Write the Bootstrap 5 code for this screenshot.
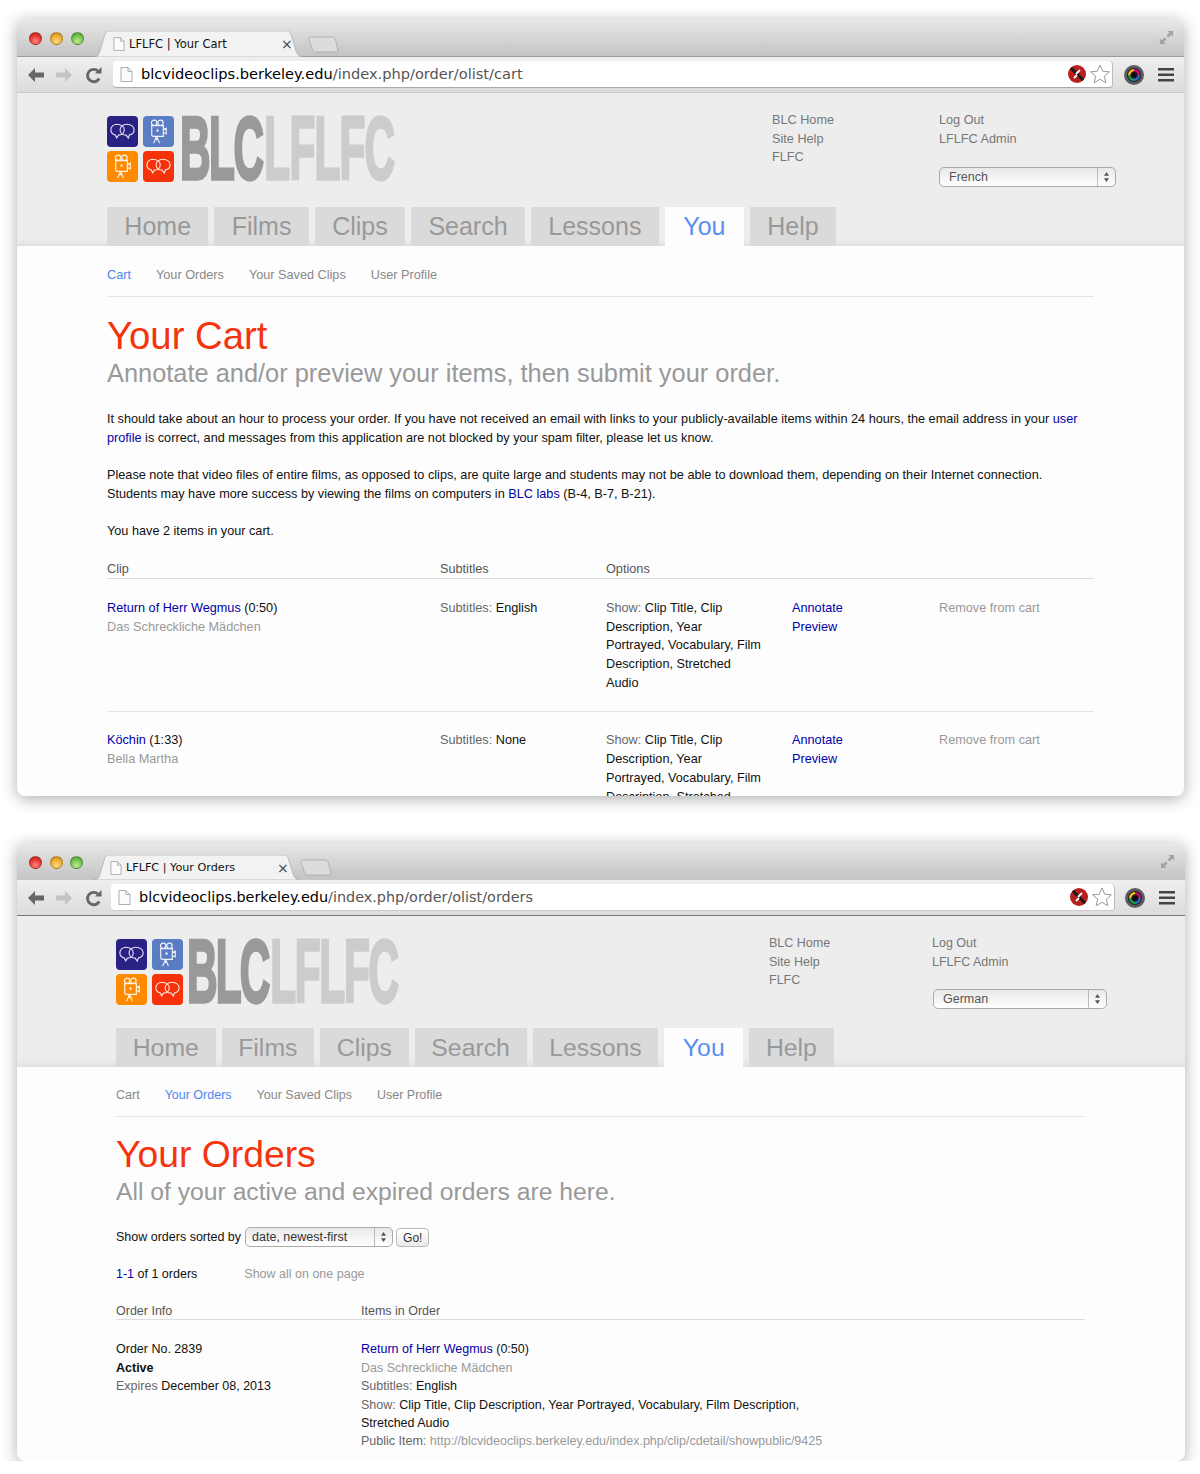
<!DOCTYPE html>
<html lang="en"><head><meta charset="utf-8"><title>LFLFC</title>
<link href="https://cdn.jsdelivr.net/npm/bootstrap@5.3.0/dist/css/bootstrap.min.css" rel="stylesheet">
<style>
html,body{background:#fff;margin:0;padding:0}
body{font-family:"Liberation Sans",Arial,sans-serif;color:#222;overflow-x:hidden}
.win{position:relative;background:#fdfdfd;border-radius:8px;overflow:hidden;box-shadow:0 3px 16px rgba(0,0,0,.32)}
.w1{margin:19px 16px 0 17px;height:777px;--lh:18.7px;--pad:90px;font-size:12.7px}
.w2{margin:47px 15px 0 17px;height:618px;--lh:18.4px;--pad:99px;font-size:12.5px}
.tabbar{height:38px;background:linear-gradient(#e8e8e8,#c4c4c4);border-bottom:1px solid #9c9c9c;padding-left:12px}
.w2 .tabbar{height:37px;border-bottom-color:#c6c6c6}
.lights{gap:8px;padding-top:13px;width:76px}
.w2 .lights{gap:7.5px}
.lamp{width:13px;height:13px;border-radius:50%;border:1px solid rgba(0,0,0,.25)}
.lamp-r{background:radial-gradient(circle at 50% 75%,#ff8a80,#e0352c 60%,#b5251f)}
.lamp-y{background:radial-gradient(circle at 50% 75%,#ffdb80,#eda92e 60%,#c0801a)}
.lamp-g{background:radial-gradient(circle at 50% 75%,#bdf08a,#6fbd4a 60%,#4b9430)}
.brtab{position:relative;width:212px;height:26px;margin-top:12px;margin-left:-11px;padding-left:19px;font:11.5px/27px "DejaVu Sans",sans-serif;color:#111;white-space:nowrap}
.w2 .brtab{margin-top:12px;height:25px;padding-left:16px;font-size:11.2px;line-height:26px}
.tabshape{position:absolute;left:0;top:0}
.tabtitle{position:relative;padding-left:16px;width:176px}
.tabdoc{position:absolute;left:0;top:6px}
.tabx{position:absolute;left:187px;top:0;font-size:14px;color:#444}
.w2 .tabx{left:183px}
.newtab{margin:17px 0 0 2px}
.w2 .newtab{margin:16px 0 0 -6px}
.fs{position:absolute;right:10px;top:11px}
.toolbar{height:36px;background:linear-gradient(#efefef,#dcdcdc);border-bottom:1px solid #c8c8c8;padding-left:10px}
.w2 .toolbar{border-bottom-color:#777}
.navic{width:18px;height:18px}
.nv2{margin-left:10px}
.nv3{margin-left:12px}
.omni{width:1000px;height:27px;margin-left:10px;background:#fff;border-radius:4px;border-bottom:1px solid #aaa;border-right:1px solid #bbb;padding:0 0 0 7px;position:relative}
.w2 .omni{width:1004px;margin-left:8px;border-bottom-color:#ccc}
.urltext{font:14.6px/28px "DejaVu Sans",sans-serif;color:#555;padding-left:8px;white-space:nowrap}
.w2 .urltext{font-size:14.4px}
.urltext b{font-weight:400;color:#000}
.omni-tail{position:absolute;right:2px;top:3px;gap:4px}
.lensic{margin-left:11px}
.w2 .lensic{margin-left:10px}
.burgic{margin-left:14px}
.hdr{background:#ededed;height:153px;padding-left:var(--pad);position:relative;box-shadow:inset 0 -8px 8px -8px rgba(0,0,0,.12)}
.w2 .hdr{height:151px}
.toprow{height:114px}
.w2 .toprow{height:112px}
.logo{margin-top:22px;width:289px}
.squares{display:grid;grid-template-columns:31px 31px;grid-template-rows:31px 31px;gap:4px 5px;margin-top:1px}
.sq{border-radius:4px;display:block}
.sq-navy{background:#2a2185}
.sq-blue{background:#5a7dc4}
.sq-orange{background:#ff8a00}
.sq-red{background:#f5320a}
.logotxt{display:flex;margin:2px 0 0 6px;width:216px;height:34px;transform:scale(.93,1.95);transform-origin:top left;font:700 45.5px/34px "Liberation Sans Narrow","Liberation Sans",sans-serif;-webkit-text-stroke:1.7px;color:#999;letter-spacing:-1.6px}
.w2 .logotxt{letter-spacing:-2px;margin-left:4px}
.logotxt span+span{color:#ccc;margin-left:2px;letter-spacing:-.9px}
.w2 .logotxt span+span{letter-spacing:-1.4px}
.toplinks{position:absolute;left:755px;top:18px;line-height:18.7px;color:#777}
.toplinks2{position:absolute;left:922px;top:18px;line-height:18.7px;color:#777}
.w2 .toplinks{left:752px}
.w2 .toplinks2{left:915px}
.fakesel{display:block;font:inherit;font-size:12.5px;line-height:18px;color:#555;border:1px solid #aaa;border-radius:5px;padding:0 0 0 9px;height:20px;
 background:linear-gradient(#bbb,#bbb) no-repeat calc(100% - 17px) 0/1px 100%,linear-gradient(#e8e8e8,#fff) no-repeat 0 0/100% 100%}
.selwrap{position:relative}
.selarrow{position:absolute;right:6px;top:5px;pointer-events:none}
.langsel{width:177px;margin-top:19px}
.w2 .langsel{width:174px;margin-top:18px;margin-left:1px}
.maintabs{gap:6px;height:39px;align-items:flex-end}
.mtab{display:block;height:39px;padding:0 17.35px;background:#dadada;color:#999;font-size:25px;line-height:39px;text-decoration:none}
.w2 .mtab{font-size:24.8px;padding:0 16.7px}
.mtab.on{background:#fdfdfd;color:#5b8ff0;padding:0 18.5px}
.w2 .mtab.on{padding:0 18.5px}
.body{padding:0 90px 0 var(--pad);line-height:var(--lh)}
.w2 .body{padding-right:100px}
.subnav{gap:25px;height:51px;padding-top:20px;border-bottom:1px solid #e4e4e4}
.w2 .subnav{height:50px;padding-top:19px}
.subnav a{color:#888;text-decoration:none}
.subnav a.on{color:#4d86f0}
.h-main{font-size:38.3px;line-height:44px;color:#f5330c;margin:17px 0 0;font-weight:400}
.w2 .h-main{font-size:37.3px;margin-top:15px}
.h-sub{font-size:25.4px;line-height:30px;color:#999;margin:0;font-weight:400}
.w2 .h-sub{font-size:24.7px;margin-top:1px}
.para{margin:0 0 18.7px;color:#111}
.para-first{margin-top:22px}
.para a,.lnk{color:#0000a8;text-decoration:none}
.grey{color:#999}
.lbl{color:#666}
.g1{display:grid;grid-template-columns:333px 166px 186px 147px 1fr}
.g1 .c3{padding-right:31px}
.thead1{color:#555;border-bottom:1px solid #ddd;margin:19px 0 1px;height:19px}
.trow1{padding:19px 0 19px;border-bottom:1px solid #e4e4e4;color:#111}
.g2{display:grid;grid-template-columns:245px 1fr}
.thead2{color:#555;border-bottom:1px solid #ddd;height:18px;margin-top:19px}
.sortrow{margin-top:20px;gap:4px;height:20px;line-height:20px;color:#111}
.sortsel{width:148px}
.sortsel .fakesel{color:#333;padding-left:6px}
.gobtn{font:12px/16px "Liberation Sans",sans-serif;height:19px;border:1px solid #bbb;border-radius:4px;background:linear-gradient(#fff,#eaeaea);color:#333;padding:1px 6px 0;margin-left:-1px}
.pager{margin-top:18px;gap:47px;color:#111}
.order{margin-top:20px;color:#111}
.showline{max-width:450px}
</style></head>
<body>
<svg width="0" height="0" class="d-block" aria-hidden="true"><defs>
<symbol id="chat" viewBox="0 0 32 32"><g fill="none" stroke="#fff" stroke-width="1.2" opacity=".85"><path d="M10.500 8.500c-4 0-6.500 2.600-6.500 5.700 0 2.600 1.800 4.700 4.500 5.300l1.500 3 1.800-2.800c3.800 0 6-2.500 6-5.500s-3-5.700-7.800-5.700z"/><path d="M20.500 8.500c-4 0-7 2.600-7 5.700s2.400 5.500 6.200 5.500l2.300 3 1.200-3.200c2.700-.6 4.800-2.700 4.800-5.300 0-3.100-3-5.700-7.500-5.700z"/></g></symbol>
<symbol id="cam" viewBox="0 0 32 32"><g fill="none" stroke="#fff" stroke-width="1.2" opacity=".9"><circle cx="11.500" cy="7" r="2.800"/><circle cx="18" cy="7" r="2.800"/><path d="M9 10h12v11H11c-1 0-2-1-2-2zM21 14l3-1.500v6L21 17"/><path d="M14 21l-3 7M14 21l3 7M14 21v4"/></g><path d="M15 13l1.500 3h-3z" fill="#fff"/></symbol>
<symbol id="arrows" viewBox="0 0 8 12"><path d="M4 0l3 4.500H1zM4 12L1 7.500h6z" fill="#555"/></symbol>
<symbol id="fsic" viewBox="0 0 16 16"><g fill="#a2a2a2"><path d="M9 1h6v6l-2-2-3 3-2-2 3-3zM1 15V9l2 2 3-3 2 2-3 3 2 2z"/></g></symbol>
<symbol id="doc" viewBox="0 0 13 15"><path d="M1 .5h7l4 4v10H1z" fill="#fbfbfb" stroke="#9a9a9a" stroke-width=".8"/><path d="M8 .5v4h4" fill="none" stroke="#9a9a9a" stroke-width=".8"/></symbol>
<symbol id="back" viewBox="0 0 18 18"><path d="M1 9l7-7v4.500h9v5H8V16z" fill="#666"/></symbol>
<symbol id="fwd" viewBox="0 0 18 18"><path d="M17 9l-7-7v4.500H1v5h9V16z" fill="#c4c4c4"/></symbol>
<symbol id="reload" viewBox="0 0 18 18"><path d="M14.200 12.500A6.200 6.200 0 1 1 13 5" fill="none" stroke="#666" stroke-width="2.800"/><path d="M10 7.500h6.500V1z" fill="#666"/></symbol>
<symbol id="bad" viewBox="0 0 18 18"><circle cx="9" cy="9" r="9" fill="#b8201f"/><path d="M3 3l12 12" stroke="#1a1a1a" stroke-width="3"/><path d="M12 5L8 9M6 13l3-3" stroke="#fff" stroke-width="1.800"/></symbol>
<symbol id="star" viewBox="0 0 20 20"><path d="M10 1l2.700 6.200 6.700.6-5.100 4.400 1.600 6.600L10 15.300 4.100 18.800l1.600-6.600L.6 7.800l6.700-.6z" fill="#fff" stroke="#8d8d8d" stroke-width=".9"/></symbol>
<symbol id="lens" viewBox="0 0 20 20"><circle cx="10" cy="10" r="10" fill="#5c5c60"/><circle cx="10" cy="10" r="7" fill="#222"/><g fill="none" stroke-width="2.200"><path d="M10 5.200a4.800 4.800 0 0 1 4.800 4.800" stroke="#e6007e"/><path d="M14.800 10a4.800 4.800 0 0 1-4.800 4.800" stroke="#2f6fe0"/><path d="M10 14.800A4.800 4.800 0 0 1 5.200 10" stroke="#1aa64a"/><path d="M5.200 10A4.800 4.800 0 0 1 10 5.200" stroke="#f3c412"/></g><circle cx="10" cy="10" r="2.600" fill="#0c0c0c"/></symbol>
<symbol id="burger" viewBox="0 0 16 14"><path d="M0 0h16v2.600H0zM0 5.500h16v2.600H0zM0 11h16v2.600H0z" fill="#444"/></symbol>
</defs></svg>

<div class="win w1">
  <div class="tabbar d-flex position-relative">
    <div class="lights d-flex"><i class="lamp lamp-r"></i><i class="lamp lamp-y"></i><i class="lamp lamp-g"></i></div>
    <div class="brtab">
      <svg class="tabshape" width="212" height="26"><path d="M0 26c4 0 5-3 6-6L11 3c1-2 2-3 4-3h178c2 0 3 1 4 3l5 17c1 3 3 6 7 6z" fill="#f2f2f2" stroke="#aaa" stroke-width=".7"/></svg>
      <div class="tabtitle"><svg class="tabdoc" width="12" height="14"><use href="#doc"/></svg>LFLFC | Your Cart</div>
      <span class="tabx">×</span>
    </div>
    <svg class="newtab" width="31" height="17" viewBox="0 0 34 18" preserveAspectRatio="none"><path d="M3 1h24c2 0 3 2 4 6l2 9c0 1-1 1-2 1H8c-2 0-3-2-4-5L1 4C1 2 2 1 3 1z" fill="#dcdcdc" stroke="#a6a6a6" stroke-width=".8"/></svg>
    <svg class="fs" width="15" height="15"><use href="#fsic"/></svg>
  </div>
  <div class="toolbar d-flex align-items-center">
    <svg class="navic" viewBox="0 0 18 18"><use href="#back"/></svg>
    <svg class="navic nv2" viewBox="0 0 18 18"><use href="#fwd"/></svg>
    <svg class="navic nv3" viewBox="0 0 18 18"><use href="#reload"/></svg>
    <div class="omni d-flex align-items-center">
      <svg width="13" height="15"><use href="#doc"/></svg>
      <span class="urltext"><b>blcvideoclips.berkeley.edu</b>/index.php/order/olist/cart</span>
      <div class="omni-tail d-flex align-items-center"><svg width="18" height="18"><use href="#bad"/></svg><svg width="20" height="20"><use href="#star"/></svg></div>
    </div>
    <svg class="lensic" width="20" height="20"><use href="#lens"/></svg>
    <svg class="burgic" width="16" height="14"><use href="#burger"/></svg>
  </div>
  <div class="hdr">
    <div class="toprow d-flex align-items-start">
      <div class="logo d-flex align-items-start">
        <div class="squares">
          <svg class="sq sq-navy" width="31" height="31"><use href="#chat"/></svg>
          <svg class="sq sq-blue" width="31" height="31"><use href="#cam"/></svg>
          <svg class="sq sq-orange" width="31" height="31"><use href="#cam"/></svg>
          <svg class="sq sq-red" width="31" height="31"><use href="#chat"/></svg>
        </div>
        <div class="logotxt"><span>BLC</span><span>LFLFC</span></div>
      </div>
      <div class="toplinks">BLC Home<br>Site Help<br>FLFC</div>
      <div class="toplinks2">Log Out<br>LFLFC Admin
        <div class="langsel selwrap"><div class="fakesel">French</div><svg class="selarrow" width="7" height="10"><use href="#arrows"/></svg></div>
      </div>
    </div>
    <div class="maintabs d-flex">
      <a class="mtab" href="#">Home</a><a class="mtab" href="#">Films</a><a class="mtab" href="#">Clips</a><a class="mtab" href="#">Search</a><a class="mtab" href="#">Lessons</a><a class="mtab on" href="#">You</a><a class="mtab" href="#">Help</a>
    </div>
  </div>
  <div class="body">
    <div class="subnav d-flex"><a class="on" href="#">Cart</a><a href="#">Your Orders</a><a href="#">Your Saved Clips</a><a href="#">User Profile</a></div>
    <h1 class="h-main">Your Cart</h1>
    <h2 class="h-sub">Annotate and/or preview your items, then submit your order.</h2>
    <p class="para para-first">It should take about an hour to process your order. If you have not received an email with links to your publicly-available items within 24 hours, the email address in your <a href="#">user profile</a> is correct, and messages from this application are not blocked by your spam filter, please let us know.</p>
    <p class="para">Please note that video files of entire films, as opposed to clips, are quite large and students may not be able to download them, depending on their Internet connection. Students may have more success by viewing the films on computers in <a href="#">BLC labs</a> (B-4, B-7, B-21).</p>
    <p class="para mb-0">You have 2 items in your cart.</p>
    <div class="g1 thead1"><div>Clip</div><div>Subtitles</div><div>Options</div></div>
    <div class="g1 trow1">
      <div><a class="lnk" href="#">Return of Herr Wegmus</a> (0:50)<br><span class="grey">Das Schreckliche Mädchen</span></div>
      <div><span class="lbl">Subtitles:</span> English</div>
      <div class="c3"><span class="lbl">Show:</span> Clip Title, Clip Description, Year Portrayed, Vocabulary, Film Description, Stretched Audio</div>
      <div><a class="lnk" href="#">Annotate</a><br><a class="lnk" href="#">Preview</a></div>
      <div class="grey">Remove from cart</div>
    </div>
    <div class="g1 trow1">
      <div><a class="lnk" href="#">Köchin</a> (1:33)<br><span class="grey">Bella Martha</span></div>
      <div><span class="lbl">Subtitles:</span> None</div>
      <div class="c3"><span class="lbl">Show:</span> Clip Title, Clip Description, Year Portrayed, Vocabulary, Film Description, Stretched Audio</div>
      <div><a class="lnk" href="#">Annotate</a><br><a class="lnk" href="#">Preview</a></div>
      <div class="grey">Remove from cart</div>
    </div>
  </div>
</div>

<div class="win w2">
  <div class="tabbar d-flex position-relative">
    <div class="lights d-flex"><i class="lamp lamp-r"></i><i class="lamp lamp-y"></i><i class="lamp lamp-g"></i></div>
    <div class="brtab">
      <svg class="tabshape" width="209" height="25" viewBox="0 0 212 26" preserveAspectRatio="none"><path d="M0 26c4 0 5-3 6-6L11 3c1-2 2-3 4-3h178c2 0 3 1 4 3l5 17c1 3 3 6 7 6z" fill="#f2f2f2" stroke="#aaa" stroke-width=".7"/></svg>
      <div class="tabtitle"><svg class="tabdoc" width="12" height="14"><use href="#doc"/></svg>LFLFC | Your Orders</div>
      <span class="tabx">×</span>
    </div>
    <svg class="newtab" width="32" height="17" viewBox="0 0 34 18" preserveAspectRatio="none"><path d="M3 1h24c2 0 3 2 4 6l2 9c0 1-1 1-2 1H8c-2 0-3-2-4-5L1 4C1 2 2 1 3 1z" fill="#dcdcdc" stroke="#a6a6a6" stroke-width=".8"/></svg>
    <svg class="fs" width="15" height="15"><use href="#fsic"/></svg>
  </div>
  <div class="toolbar d-flex align-items-center">
    <svg class="navic" viewBox="0 0 18 18"><use href="#back"/></svg>
    <svg class="navic nv2" viewBox="0 0 18 18"><use href="#fwd"/></svg>
    <svg class="navic nv3" viewBox="0 0 18 18"><use href="#reload"/></svg>
    <div class="omni d-flex align-items-center">
      <svg width="13" height="15"><use href="#doc"/></svg>
      <span class="urltext"><b>blcvideoclips.berkeley.edu</b>/index.php/order/olist/orders</span>
      <div class="omni-tail d-flex align-items-center"><svg width="18" height="18"><use href="#bad"/></svg><svg width="20" height="20"><use href="#star"/></svg></div>
    </div>
    <svg class="lensic" width="20" height="20"><use href="#lens"/></svg>
    <svg class="burgic" width="16" height="14"><use href="#burger"/></svg>
  </div>
  <div class="hdr">
    <div class="toprow d-flex align-items-start">
      <div class="logo d-flex align-items-start">
        <div class="squares">
          <svg class="sq sq-navy" width="31" height="31"><use href="#chat"/></svg>
          <svg class="sq sq-blue" width="31" height="31"><use href="#cam"/></svg>
          <svg class="sq sq-orange" width="31" height="31"><use href="#cam"/></svg>
          <svg class="sq sq-red" width="31" height="31"><use href="#chat"/></svg>
        </div>
        <div class="logotxt"><span>BLC</span><span>LFLFC</span></div>
      </div>
      <div class="toplinks">BLC Home<br>Site Help<br>FLFC</div>
      <div class="toplinks2">Log Out<br>LFLFC Admin
        <div class="langsel selwrap"><div class="fakesel">German</div><svg class="selarrow" width="7" height="10"><use href="#arrows"/></svg></div>
      </div>
    </div>
    <div class="maintabs d-flex">
      <a class="mtab" href="#">Home</a><a class="mtab" href="#">Films</a><a class="mtab" href="#">Clips</a><a class="mtab" href="#">Search</a><a class="mtab" href="#">Lessons</a><a class="mtab on" href="#">You</a><a class="mtab" href="#">Help</a>
    </div>
  </div>
  <div class="body">
    <div class="subnav d-flex"><a href="#">Cart</a><a class="on" href="#">Your Orders</a><a href="#">Your Saved Clips</a><a href="#">User Profile</a></div>
    <h1 class="h-main">Your Orders</h1>
    <h2 class="h-sub">All of your active and expired orders are here.</h2>
    <div class="sortrow d-flex align-items-center">Show orders sorted by
      <div class="sortsel selwrap"><div class="fakesel">date, newest-first</div><svg class="selarrow" width="7" height="10"><use href="#arrows"/></svg></div>
      <button type="button" class="gobtn">Go!</button>
    </div>
    <div class="pager d-flex"><span><a class="lnk" href="#">1-1</a> of 1 orders</span><span class="grey">Show all on one page</span></div>
    <div class="g2 thead2"><div>Order Info</div><div>Items in Order</div></div>
    <div class="g2 order">
      <div>Order No. 2839<br><strong>Active</strong><br><span class="lbl">Expires</span> December 08, 2013</div>
      <div><a class="lnk" href="#">Return of Herr Wegmus</a> (0:50)<br><span class="grey">Das Schreckliche Mädchen</span><br><span class="lbl">Subtitles:</span> English
        <div class="showline"><span class="lbl">Show:</span> Clip Title, Clip Description, Year Portrayed, Vocabulary, Film Description, Stretched Audio</div>
        <span class="lbl">Public Item:</span> <span class="grey">http://blcvideoclips.berkeley.edu/index.php/clip/cdetail/showpublic/9425</span></div>
    </div>
  </div>
</div>
</body></html>
